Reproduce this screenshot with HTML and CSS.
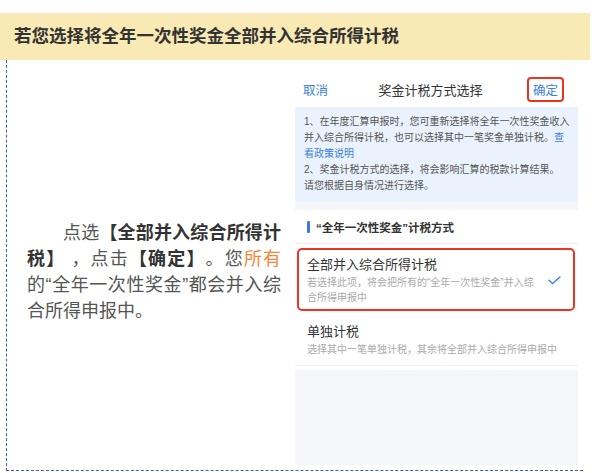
FILE: index.html
```html
<!DOCTYPE html>
<html lang="zh-CN">
<head>
  <meta charset="UTF-8" />
  <title>奖金计税方式选择</title>
  <link rel="stylesheet" href="styles.css">
</head>
<body>

  <div class="title-bar">若您选择将全年一次性奖金全部并入综合所得计税</div>

  <div class="content">
    <div class="explain">
      <p>点选<b>【全部并入综合所得计税】</b> ，点击<b>【确定】</b>。您<span class="hl">所有</span>的“全年一次性奖金”都会并入综合所得申报中。</p>
    </div>

    <div class="phone">
      <div class="nav">
        <span class="nav-link">取消</span>
        <span class="nav-title">奖金计税方式选择</span>
        <span class="nav-link confirm">确定</span>
      </div>

      <div class="notice">
        1、在年度汇算申报时，您可重新选择将全年一次性奖金收入<br>
        并入综合所得计税，也可以选择其中一笔奖金单独计税。<span class="link">查</span><br>
        <span class="link">看政策说明</span><br>
        2、奖金计税方式的选择，将会影响汇算的税款计算结果。<br>
        请您根据自身情况进行选择。
      </div>

      <div class="section">
        <div class="section-head">“全年一次性奖金”计税方式</div>

        <div class="option selected">
          <div class="option-text">
            <div class="option-name">全部并入综合所得计税</div>
            <div class="option-desc">若选择此项，将会把所有的“全年一次性奖金”并入综<br>合所得申报中</div>
          </div>
          <svg class="check" width="13" height="9" viewBox="0 0 13 9">
            <path d="M1 4.2 L4.6 7.6 L12 1" fill="none" stroke="#3f7fe3" stroke-width="1.4" stroke-linecap="round" stroke-linejoin="round"/>
          </svg>
        </div>

        <div class="option">
          <div class="option-text">
            <div class="option-name">单独计税</div>
            <div class="option-desc">选择其中一笔单独计税，其余将全部并入综合所得申报中</div>
          </div>
        </div>
      </div>
    </div>
  </div>

</body>
</html>
```

FILE: styles.css
```css
body {
  margin: 0;
  font-family: "Liberation Sans", "Noto Sans CJK SC", sans-serif;
  color: #333;
  background: #fff;
  text-spacing-trim: space-all;
}

.title-bar {
  margin-top: 13px;
  width: 590px;
  height: 47px;
  line-height: 47px;
  padding-left: 14px;
  box-sizing: border-box;
  background: #f8e9b5;
  font-size: 17.5px;
  font-weight: bold;
  color: #333;
}

.content {
  margin-left: 6px;
  width: 577px;
  height: 411px;
  box-sizing: border-box;
  border-left: 1px dashed #3b5cc6;
  border-bottom: 1px dashed #3b5cc6;
  padding: 12px 5px 5px 0;
  display: flex;
}

.explain {
  flex: 1;
  display: flex;
  align-items: center;
  padding: 6px 14px 0 20px;
}

.explain p {
  margin: 0;
  font-size: 18px;
  line-height: 26px;
  text-indent: 2em;
  text-align: justify;
  color: #555;
}

.explain b {
  color: #333;
}

.hl {
  color: #f4883a;
}

.phone {
  width: 283px;
  background: #f5f6fa;
  display: flex;
  flex-direction: column;
}

.nav {
  height: 35px;
  background: #fff;
  display: flex;
  align-items: center;
  justify-content: space-between;
  padding: 0 14px 0 8px;
  font-size: 12.5px;
}

.nav-title {
  font-size: 13px;
  color: #333;
  margin-left: 6px;
}

.nav-link {
  color: #3d7ede;
}

.confirm {
  border: 2px solid #ec3324;
  border-radius: 4px;
  padding: 1px 4px;
}

.notice {
  background: #eaf3fd;
  padding: 7px 0 8px 9px;
  font-size: 10px;
  line-height: 16px;
  color: #555;
  white-space: nowrap;
}

.link {
  color: #3d7ede;
}

.section {
  margin-top: 8px;
  background: #fff;
  padding-bottom: 4px;
}

.section-head {
  height: 33px;
  display: flex;
  align-items: center;
  padding-left: 12px;
  font-size: 11.5px;
  font-weight: bold;
  color: #333;
  border-bottom: 1px solid #eef0f3;
}

.section-head::before {
  content: "";
  width: 3px;
  height: 12px;
  background: #3b7ddd;
  margin-right: 6px;
  border-radius: 1px;
}

.option {
  display: flex;
  align-items: center;
  padding: 8px 10px 8px 12px;
  border-bottom: 1px solid #f0f1f4;
}

.option.selected {
  margin: 4px 3px 4px 2px;
  padding: 6px 10px 4px 8px;
  border: 2px solid #ec3324;
  border-radius: 5px;
}

.option-text {
  flex: 1;
}

.option-name {
  font-size: 13px;
  line-height: 18px;
  color: #333;
}

.option-desc {
  font-size: 10px;
  line-height: 15px;
  color: #aaa;
  margin-top: 1px;
}

.check {
  margin-right: 2px;
}
```
